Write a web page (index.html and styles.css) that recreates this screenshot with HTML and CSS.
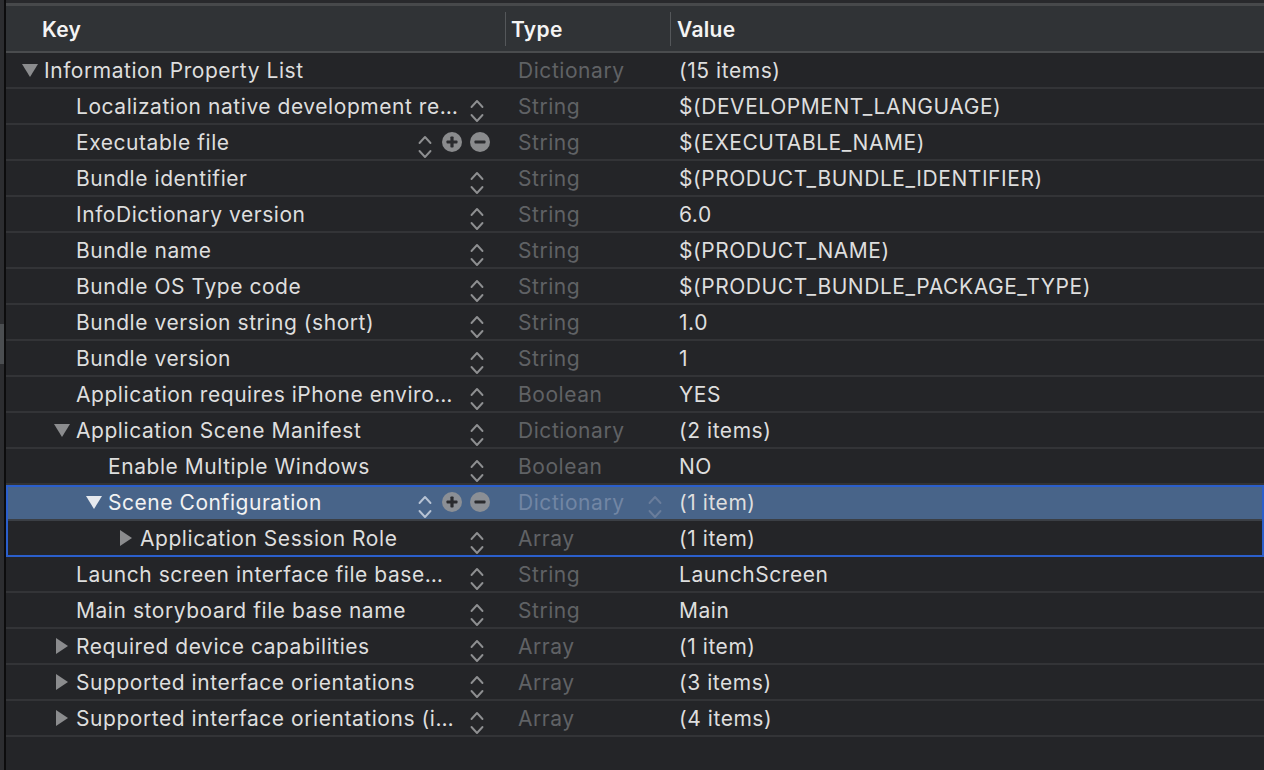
FILE: index.html
```html
<!DOCTYPE html>
<html>
<head>
<meta charset="utf-8">
<link rel="stylesheet" href="styles.css">
<title>Info.plist</title>
</head>
<body>
<svg width="0" height="0" class="defs">
  <defs>
    <symbol id="stepper" viewBox="0 0 14 24">
      <polyline points="1.5,8 7,2 12.5,8" fill="none" stroke="currentColor" stroke-width="1.9" stroke-linecap="round" stroke-linejoin="round"/>
      <polyline points="1.5,16 7,22 12.5,16" fill="none" stroke="currentColor" stroke-width="1.9" stroke-linecap="round" stroke-linejoin="round"/>
    </symbol>
    <symbol id="plus" viewBox="0 0 20 20">
      <circle cx="10" cy="10" r="10" fill="currentColor"/>
      <rect x="4.5" y="8.4" width="11" height="3.2" rx="0.8" fill="#2a2b2e"/>
      <rect x="8.4" y="4.5" width="3.2" height="11" rx="0.8" fill="#2a2b2e"/>
    </symbol>
    <symbol id="minus" viewBox="0 0 20 20">
      <circle cx="10" cy="10" r="10" fill="currentColor"/>
      <rect x="4.5" y="8.4" width="11" height="3.2" rx="0.8" fill="#2a2b2e"/>
    </symbol>
    <symbol id="down" viewBox="0 0 16 14">
      <polygon points="0,1 16,1 8,14" fill="currentColor"/>
    </symbol>
    <symbol id="right" viewBox="0 0 12 16">
      <polygon points="0,0 12,8 0,16" fill="currentColor"/>
    </symbol>
  </defs>
</svg>
<div class="window">
  <div class="gutter"><div class="gutter-thumb"></div></div>
  <div class="divider"></div>
  <div class="editor">
    <div class="topbar"></div>
    <div class="header">
      <div class="hcell hkey">Key</div>
      <div class="hcell htype">Type</div>
      <div class="hcell hvalue">Value</div>
    </div>
    <div class="rows">
      <div class="row">
        <div class="key lvl0"><span class="disc"><svg class="tri-down"><use href="#down"/></svg></span><span class="name">Information Property List</span></div>
        <div class="type">Dictionary</div>
        <div class="value">(15 items)</div>
      </div>
      <div class="row">
        <div class="key lvl1"><span class="disc"></span><span class="name">Localization native development re…</span><span class="ctrls"><svg class="step"><use href="#stepper"/></svg></span></div>
        <div class="type">String</div>
        <div class="value">$(DEVELOPMENT_LANGUAGE)</div>
      </div>
      <div class="row">
        <div class="key lvl1 edit"><span class="disc"></span><span class="name">Executable file</span><span class="ctrls"><svg class="step"><use href="#stepper"/></svg><svg class="pm plus"><use href="#plus"/></svg><svg class="pm minus"><use href="#minus"/></svg></span></div>
        <div class="type">String</div>
        <div class="value">$(EXECUTABLE_NAME)</div>
      </div>
      <div class="row">
        <div class="key lvl1"><span class="disc"></span><span class="name">Bundle identifier</span><span class="ctrls"><svg class="step"><use href="#stepper"/></svg></span></div>
        <div class="type">String</div>
        <div class="value">$(PRODUCT_BUNDLE_IDENTIFIER)</div>
      </div>
      <div class="row">
        <div class="key lvl1"><span class="disc"></span><span class="name">InfoDictionary version</span><span class="ctrls"><svg class="step"><use href="#stepper"/></svg></span></div>
        <div class="type">String</div>
        <div class="value">6.0</div>
      </div>
      <div class="row">
        <div class="key lvl1"><span class="disc"></span><span class="name">Bundle name</span><span class="ctrls"><svg class="step"><use href="#stepper"/></svg></span></div>
        <div class="type">String</div>
        <div class="value">$(PRODUCT_NAME)</div>
      </div>
      <div class="row">
        <div class="key lvl1"><span class="disc"></span><span class="name">Bundle OS Type code</span><span class="ctrls"><svg class="step"><use href="#stepper"/></svg></span></div>
        <div class="type">String</div>
        <div class="value">$(PRODUCT_BUNDLE_PACKAGE_TYPE)</div>
      </div>
      <div class="row">
        <div class="key lvl1"><span class="disc"></span><span class="name">Bundle version string (short)</span><span class="ctrls"><svg class="step"><use href="#stepper"/></svg></span></div>
        <div class="type">String</div>
        <div class="value">1.0</div>
      </div>
      <div class="row">
        <div class="key lvl1"><span class="disc"></span><span class="name">Bundle version</span><span class="ctrls"><svg class="step"><use href="#stepper"/></svg></span></div>
        <div class="type">String</div>
        <div class="value">1</div>
      </div>
      <div class="row">
        <div class="key lvl1"><span class="disc"></span><span class="name">Application requires iPhone enviro…</span><span class="ctrls"><svg class="step"><use href="#stepper"/></svg></span></div>
        <div class="type">Boolean</div>
        <div class="value">YES</div>
      </div>
      <div class="row">
        <div class="key lvl0b"><span class="disc"><svg class="tri-down"><use href="#down"/></svg></span><span class="name">Application Scene Manifest</span><span class="ctrls"><svg class="step"><use href="#stepper"/></svg></span></div>
        <div class="type">Dictionary</div>
        <div class="value">(2 items)</div>
      </div>
      <div class="row">
        <div class="key lvl2"><span class="disc"></span><span class="name">Enable Multiple Windows</span><span class="ctrls"><svg class="step"><use href="#stepper"/></svg></span></div>
        <div class="type">Boolean</div>
        <div class="value">NO</div>
      </div>
      <div class="selection">
        <div class="row selected">
          <div class="key lvl1b edit"><span class="disc"><svg class="tri-down"><use href="#down"/></svg></span><span class="name">Scene Configuration</span><span class="ctrls"><svg class="step"><use href="#stepper"/></svg><svg class="pm plus"><use href="#plus"/></svg><svg class="pm minus"><use href="#minus"/></svg></span></div>
          <div class="type">Dictionary<svg class="step type-step"><use href="#stepper"/></svg></div>
          <div class="value">(1 item)</div>
        </div>
        <div class="row">
          <div class="key lvl3"><span class="disc"><svg class="tri-right"><use href="#right"/></svg></span><span class="name">Application Session Role</span><span class="ctrls"><svg class="step"><use href="#stepper"/></svg></span></div>
          <div class="type">Array</div>
          <div class="value">(1 item)</div>
        </div>
      </div>
      <div class="row">
        <div class="key lvl1"><span class="disc"></span><span class="name">Launch screen interface file base…</span><span class="ctrls"><svg class="step"><use href="#stepper"/></svg></span></div>
        <div class="type">String</div>
        <div class="value">LaunchScreen</div>
      </div>
      <div class="row">
        <div class="key lvl1"><span class="disc"></span><span class="name">Main storyboard file base name</span><span class="ctrls"><svg class="step"><use href="#stepper"/></svg></span></div>
        <div class="type">String</div>
        <div class="value">Main</div>
      </div>
      <div class="row">
        <div class="key lvl1"><span class="disc disc-r"><svg class="tri-right"><use href="#right"/></svg></span><span class="name">Required device capabilities</span><span class="ctrls"><svg class="step"><use href="#stepper"/></svg></span></div>
        <div class="type">Array</div>
        <div class="value">(1 item)</div>
      </div>
      <div class="row">
        <div class="key lvl1"><span class="disc disc-r"><svg class="tri-right"><use href="#right"/></svg></span><span class="name">Supported interface orientations</span><span class="ctrls"><svg class="step"><use href="#stepper"/></svg></span></div>
        <div class="type">Array</div>
        <div class="value">(3 items)</div>
      </div>
      <div class="row">
        <div class="key lvl1"><span class="disc disc-r"><svg class="tri-right"><use href="#right"/></svg></span><span class="name">Supported interface orientations (i…</span><span class="ctrls"><svg class="step"><use href="#stepper"/></svg></span></div>
        <div class="type">Array</div>
        <div class="value">(4 items)</div>
      </div>
    </div>
  </div>
</div>
</body>
</html>
```

FILE: styles.css
```css
html, body {
  margin: 0;
  padding: 0;
  background: #242528;
  height: 100%;
  overflow: hidden;
}

.defs {
  position: absolute;
  width: 0;
  height: 0;
}

.window {
  display: flex;
  height: 770px;
  width: 1264px;
  font-family: Inter, "Liberation Sans", sans-serif;
  font-size: 21px;
  letter-spacing: 0.55px;
  color: #dedede;
}

.gutter {
  width: 4px;
  background: #2c2d30;
  flex: none;
}

.gutter-thumb {
  margin-top: 324px;
  height: 40px;
  background: #4b4e51;
}

.divider {
  width: 2px;
  background: #0c0c0d;
  flex: none;
}

.editor {
  flex: 1;
  display: flex;
  flex-direction: column;
  background: #242528;
  min-width: 0;
}

.topbar {
  height: 3px;
  background: #28292c;
  border-bottom: 3px solid #47494b;
}

.header {
  display: grid;
  grid-template-columns: 499px 165px 1fr;
  background: #303336;
  border-bottom: 2px solid #4a4c4e;
  box-sizing: border-box;
  height: 47px;
}

.hcell {
  display: flex;
  align-items: center;
  margin: 6px 0 5px;
  font-weight: 600;
  letter-spacing: 0.3px;
  color: #f4f4f4;
}

.hkey {
  padding-left: 36px;
}

.htype {
  border-left: 1px solid #54575a;
  padding-left: 5px;
}

.hvalue {
  border-left: 1px solid #54575a;
  padding-left: 6px;
}

.rows {
  display: flex;
  flex-direction: column;
}

.row {
  display: grid;
  grid-template-columns: 499px 165px 1fr;
  height: 34px;
  border-bottom: 2px solid #333437;
  align-items: center;
}

.key {
  display: flex;
  align-items: center;
  height: 100%;
  padding-right: 21px;
  min-width: 0;
}

.key.edit {
  padding-right: 15px;
}

.lvl0 { padding-left: 16px; }
.lvl0b { padding-left: 48px; }
.lvl1 { padding-left: 48px; }
.lvl1b { padding-left: 80px; }
.lvl2 { padding-left: 80px; }
.lvl3 { padding-left: 112px; }

.disc {
  width: 22px;
  flex: none;
  display: flex;
  align-items: center;
  color: #8b8c8e;
}

.tri-down {
  width: 16px;
  height: 14px;
}

.tri-right {
  width: 12px;
  height: 16px;
  margin-left: 2px;
}

.name {
  flex: 1;
  white-space: nowrap;
  overflow: hidden;
  min-width: 0;
}

.ctrls {
  display: flex;
  align-items: center;
  flex: none;
  color: #8e8f91;
}

.step {
  width: 14px;
  height: 24px;
  margin-top: 10px;
}

.pm {
  width: 20px;
  height: 20px;
  color: #8a8b8d;
}

.plus {
  margin-left: 10px;
}

.minus {
  margin-left: 8px;
}

.type {
  display: flex;
  align-items: center;
  padding-left: 13px;
  padding-right: 8px;
  color: #606265;
  height: 100%;
}

.value {
  padding-left: 9px;
  white-space: nowrap;
}

.selection {
  outline: 2px solid #2b5fcc;
  outline-offset: -2px;
  position: relative;
  z-index: 1;
  display: flex;
  flex-direction: column;
}

.row.selected {
  background: #486489;
  border-bottom-color: #3b3f45;
}

.selected .name {
  color: #f2f2f2;
}

.selected .disc {
  color: #e6e9ee;
}

.selected .ctrls {
  color: #b7c3d4;
}

.selected .pm {
  color: #8b8f95;
}

.selected .type {
  color: #7286a4;
}

.type-step {
  margin-left: auto;
  color: #6a7d9b;
}
```
